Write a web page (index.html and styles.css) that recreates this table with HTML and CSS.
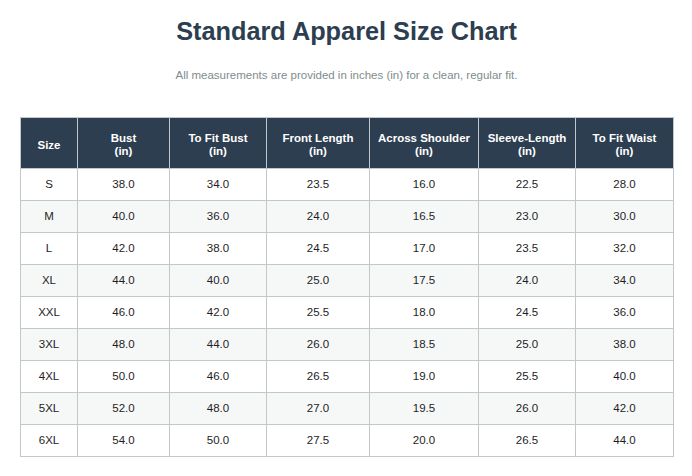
FILE: index.html
```html
<!DOCTYPE html>
<html>
<head>
<meta charset="utf-8">
<link rel="stylesheet" href="styles.css">
</head>
<body>
<div class="page">
  <h1 class="title">Standard Apparel Size Chart</h1>
  <p class="subtitle">All measurements are provided in inches (in) for a clean, regular fit.</p>
  <table class="chart">
    <colgroup>
      <col class="c1"><col class="c2"><col class="c3"><col class="c4"><col class="c5"><col class="c6"><col class="c7">
    </colgroup>
    <thead>
      <tr>
        <th>Size</th>
        <th>Bust<br>(in)</th>
        <th>To Fit Bust<br>(in)</th>
        <th>Front Length<br>(in)</th>
        <th>Across Shoulder<br>(in)</th>
        <th>Sleeve-Length<br>(in)</th>
        <th>To Fit Waist<br>(in)</th>
      </tr>
    </thead>
    <tbody>
      <tr><td>S</td><td>38.0</td><td>34.0</td><td>23.5</td><td>16.0</td><td>22.5</td><td>28.0</td></tr>
      <tr><td>M</td><td>40.0</td><td>36.0</td><td>24.0</td><td>16.5</td><td>23.0</td><td>30.0</td></tr>
      <tr><td>L</td><td>42.0</td><td>38.0</td><td>24.5</td><td>17.0</td><td>23.5</td><td>32.0</td></tr>
      <tr><td>XL</td><td>44.0</td><td>40.0</td><td>25.0</td><td>17.5</td><td>24.0</td><td>34.0</td></tr>
      <tr><td>XXL</td><td>46.0</td><td>42.0</td><td>25.5</td><td>18.0</td><td>24.5</td><td>36.0</td></tr>
      <tr><td>3XL</td><td>48.0</td><td>44.0</td><td>26.0</td><td>18.5</td><td>25.0</td><td>38.0</td></tr>
      <tr><td>4XL</td><td>50.0</td><td>46.0</td><td>26.5</td><td>19.0</td><td>25.5</td><td>40.0</td></tr>
      <tr><td>5XL</td><td>52.0</td><td>48.0</td><td>27.0</td><td>19.5</td><td>26.0</td><td>42.0</td></tr>
      <tr><td>6XL</td><td>54.0</td><td>50.0</td><td>27.5</td><td>20.0</td><td>26.5</td><td>44.0</td></tr>
    </tbody>
  </table>
</div>
</body>
</html>
```
FILE: styles.css
```css
html, body {
  margin: 0;
  padding: 0;
  background: #ffffff;
}
.page {
  padding: 16px 19px 20px 20px;
  font-family: "Liberation Sans", Arial, sans-serif;
}
.title {
  margin: 0;
  text-align: center;
  font-size: 25.3px;
  line-height: 30px;
  font-weight: bold;
  color: #2c3e50;
}
.subtitle {
  margin: 22px 0 0 0;
  text-align: center;
  font-size: 11.5px;
  line-height: 14px;
  color: #7f8c8d;
}
.chart {
  margin-top: 35px;
  width: 653px;
  border-collapse: collapse;
  table-layout: fixed;
  font-size: 11.5px;
  color: #1e1e1e;
}
.c1 { width: 57px; }
.c2 { width: 92px; }
.c3 { width: 97px; }
.c4 { width: 103px; }
.c5 { width: 109px; }
.c6 { width: 97px; }
.c7 { width: 98px; }
.chart th, .chart td {
  border: 1px solid #c3c7cb;
  text-align: center;
  padding: 0 4px;
}
.chart th {
  background: #2c3e50;
  color: #ffffff;
  font-weight: bold;
  padding-top: 4px;
  height: 46px;
  line-height: 13px;
}
.chart td {
  height: 31px;
  line-height: 13px;
}
.chart tbody tr:nth-child(even) td {
  background: #f6f8f8;
}
```
